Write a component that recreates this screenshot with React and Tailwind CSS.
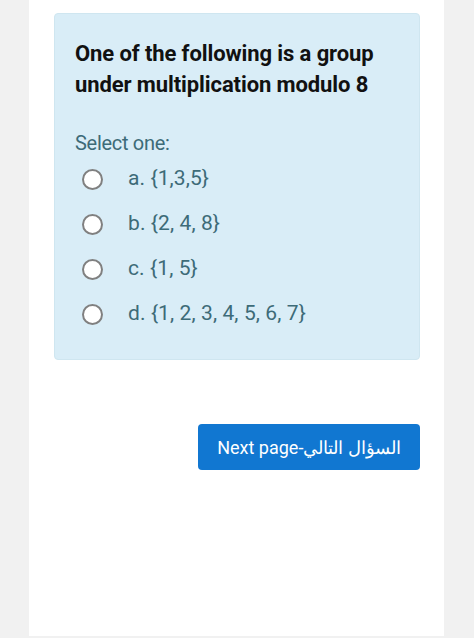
import React from 'react';

const options = [
  { key: 'a', text: '{1,3,5}' },
  { key: 'b', text: '{2, 4, 8}' },
  { key: 'c', text: '{1, 5}' },
  { key: 'd', text: '{1, 2, 3, 4, 5, 6, 7}' },
];

export default function App() {
  return (
    <div className="flex h-[638px] w-[474px] bg-[#f1f1f1] font-['Roboto',sans-serif]">
      <div className="ml-[29px] w-[415px] h-[636px] bg-white pt-[13px]">
        {/* question card */}
        <div className="ml-[25px] w-[366px] h-[347px] rounded-[4px] border border-[#cfe6f0] bg-[#d9edf7] pl-[20px] pt-[24px]">
          <h2 className="text-[22px] font-bold leading-[31px] text-[#111] tracking-[-0.1px]">
            One of the following is a group
            <br />
            under multiplication modulo 8
          </h2>
          <p className="mt-[30px] text-[20px] leading-[26px] text-[#3d6b78] tracking-[-0.3px]">Select one:</p>
          <ul className="mt-[10px] flex flex-col gap-[19px]">
            {options.map((o) => (
              <li key={o.key} className="flex h-[26px] items-center">
                <span className="ml-[7px] h-[21px] w-[21px] shrink-0 rounded-full border-2 border-[#808080] bg-white" />
                <span className="ml-[25px] text-[21px] text-[#3d6b78] tracking-[0.1px]">
                  {o.key}. {o.text}
                </span>
              </li>
            ))}
          </ul>
        </div>

        <div className="mt-[64px] flex justify-end pr-[24px]">
          <button className="h-[46px] w-[222px] rounded-[4px] bg-[#1177d1] text-[18px] text-white">
            Next page-السؤال التالي
          </button>
        </div>
      </div>
    </div>
  );
}
